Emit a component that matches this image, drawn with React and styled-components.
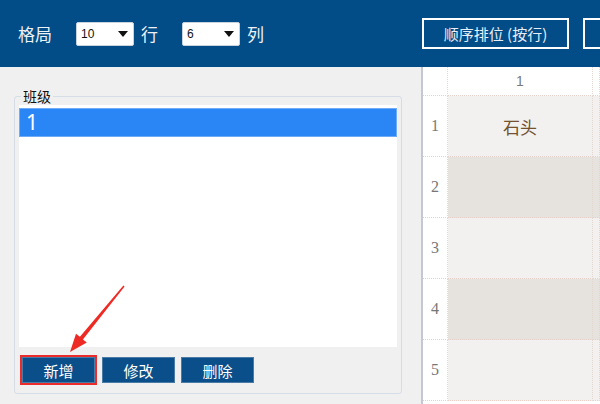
import styled, { createGlobalStyle } from "styled-components";

const GlobalStyle = createGlobalStyle`
  html, body {
    margin: 0;
    padding: 0;
    background: #f0f0f0;
  }
  body {
    font-family: "Noto Sans CJK SC", "Noto Sans", sans-serif;
  }
`;

const rows = [
  { num: 1, name: "石头" },
  { num: 2, name: "" },
  { num: 3, name: "" },
  { num: 4, name: "" },
  { num: 5, name: "" },
];

const Caret = () => (
  <svg width="10" height="6" viewBox="0 0 10 6">
    <path d="M0 0 L10 0 L5 6 Z" fill="#111" />
  </svg>
);

const Select = ({ value }) => (
  <SelectBox>
    <span>{value}</span>
    <Caret />
  </SelectBox>
);

const Arrow = () => (
  <ArrowSvg width="600" height="404" viewBox="0 0 600 404">
    <polygon
      points="124.6,286.4 82.9,339.4 86.8,342.5 70,352 76,333.7 79.9,336.8 123.4,285.6"
      fill="#ee2a24"
    />
  </ArrowSvg>
);

const App = () => {
  return (
    <Page>
      <GlobalStyle />
      <Header>
        <Label>格局</Label>
        <Select value="10" />
        <Unit>行</Unit>
        <Select value="6" />
        <Unit>列</Unit>
        <HeaderButton $first>顺序排位 (按行)</HeaderButton>
        <HeaderButton>顺序排位 (按列)</HeaderButton>
      </Header>
      <Body>
        <LeftPane>
          <Group>
            <GroupTitle>班级</GroupTitle>
            <List>
              <ListItem $selected>1</ListItem>
            </List>
            <ButtonRow>
              <ActionButton $highlight>新增</ActionButton>
              <ActionButton>修改</ActionButton>
              <ActionButton>删除</ActionButton>
            </ButtonRow>
          </Group>
        </LeftPane>
        <SeatGrid>
          <Corner />
          <ColHead>1</ColHead>
          <ColHead />
          {rows.map((r) => [
            <RowHead key={`h${r.num}`}>{r.num}</RowHead>,
            <Seat key={`a${r.num}`} $even={r.num % 2 === 0}>
              {r.name}
            </Seat>,
            <Seat key={`b${r.num}`} $even={r.num % 2 === 0} />,
          ])}
        </SeatGrid>
      </Body>
      <Arrow />
    </Page>
  );
};

const Page = styled.div`
  position: relative;
  width: 600px;
  height: 404px;
  overflow: hidden;
  background: #f0f0f0;
`;

const ArrowSvg = styled.svg`
  position: absolute;
  left: 0;
  top: 0;
  pointer-events: none;
`;

const Header = styled.div`
  height: 67px;
  background: #024c88;
  display: flex;
  align-items: center;
  padding-left: 18px;
  box-sizing: border-box;
  white-space: nowrap;
  overflow: hidden;
`;

const Label = styled.span`
  flex-shrink: 0;
  color: #eef2f7;
  font-size: 17px;
  margin-right: 24px;
`;

const Unit = styled.span`
  flex-shrink: 0;
  color: #eef2f7;
  font-size: 17px;
  margin: 0 24px 0 7px;
`;

const SelectBox = styled.div`
  flex-shrink: 0;
  width: 58px;
  height: 24px;
  box-sizing: border-box;
  background: #fff;
  border: 1px solid #c9d3de;
  border-radius: 2px;
  display: flex;
  align-items: center;
  justify-content: space-between;
  padding: 0 5px 0 4px;
  font-family: "Liberation Sans", Arial, sans-serif;
  font-size: 12px;
  color: #111;
`;

const HeaderButton = styled.div`
  flex-shrink: 0;
  width: 147px;
  height: 31px;
  box-sizing: border-box;
  border: 2px solid #fff;
  color: #e8eef5;
  font-size: 15px;
  display: flex;
  align-items: center;
  justify-content: center;
  margin-left: ${(p) => (p.$first ? "134px" : "14px")};
`;

const Body = styled.div`
  display: flex;
  height: 337px;
`;

const LeftPane = styled.div`
  width: 421px;
  flex-shrink: 0;
  padding: 29px 0 0 14px;
  box-sizing: border-box;
`;

const Group = styled.div`
  position: relative;
  width: 388px;
  height: 298px;
  box-sizing: border-box;
  border: 1px solid #d6dde6;
  border-radius: 3px;
  padding: 8px 4px 0;
  display: flex;
  flex-direction: column;
  background: #f0f0f0;
`;

const GroupTitle = styled.span`
  position: absolute;
  top: -9px;
  left: 6px;
  padding: 0 2px;
  background: #f0f0f0;
  font-size: 14px;
  line-height: 16px;
  color: #111;
`;

const List = styled.div`
  height: 242px;
  background: #fff;
  padding-top: 3px;
  box-sizing: border-box;
`;

const ListItem = styled.div`
  height: 29px;
  box-sizing: border-box;
  border: 1px solid #6eaaf5;
  background: ${(p) => (p.$selected ? "#2a86f4" : "transparent")};
  color: ${(p) => (p.$selected ? "#fff" : "#111")};
  font-family: "Noto Sans", sans-serif;
  font-size: 21px;
  line-height: 27px;
  padding-left: 6px;
`;

const ButtonRow = styled.div`
  flex: 1;
  display: flex;
  align-items: center;
  gap: 6px;
  padding-left: 3px;
`;

const ActionButton = styled.div`
  width: 73px;
  height: 26px;
  box-sizing: border-box;
  background: #0b4f8a;
  border: 1px solid #4a7aa6;
  color: #fff;
  font-size: 15px;
  display: flex;
  align-items: center;
  justify-content: center;
  outline: ${(p) => (p.$highlight ? "2px solid #ec2b2b" : "none")};
  margin-right: ${(p) => (p.$highlight ? "1px" : "0")};
`;

const SeatGrid = styled.div`
  flex: 1;
  display: grid;
  grid-template-columns: 25px 145px 1fr;
  grid-template-rows: 29px repeat(5, 61px);
  border-left: 2px solid #c3c8d2;
  background: #fff;
  overflow: hidden;
`;

const Cell = styled.div`
  box-sizing: border-box;
  border-right: 1px dotted #e2d6cf;
  border-bottom: 1px dotted #e6d2cb;
  display: flex;
  align-items: center;
  justify-content: center;
`;

const Corner = styled(Cell)`
  background: #fff;
`;

const ColHead = styled(Cell)`
  background: #fff;
  color: #7a7a7a;
  font-family: "Liberation Sans", Arial, sans-serif;
  font-size: 14px;
`;

const RowHead = styled(Cell)`
  background: #fff;
  color: #777;
  font-family: "Liberation Serif", serif;
  font-size: 16px;
`;

const Seat = styled(Cell)`
  background: ${(p) => (p.$even ? "#e6e2de" : "#f2f1ef")};
  color: #74522f;
  font-size: 17px;
`;

export default App;
